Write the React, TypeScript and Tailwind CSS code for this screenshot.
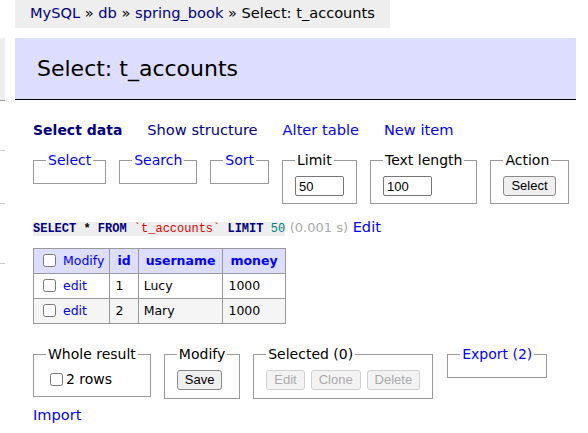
import React from "react";

const blue = "text-[#0000ff]";
const navy = "text-[#000080]";

function Box({ legend, link, children, pad = "pb-[7px]", extra = "" }: { legend: string; link?: boolean; children?: React.ReactNode; pad?: string; extra?: string }) {
  return (
    <fieldset className={`border border-[#999] px-[12px] pt-[7px] ${pad} min-w-0 ${extra}`}>
      <legend className={`px-[2px] text-[14px] leading-[18px] whitespace-nowrap ${link ? blue : "text-black"}`}>{legend}</legend>
      {children}
    </fieldset>
  );
}

function Btn({ children, disabled }: { children: React.ReactNode; disabled?: boolean }) {
  return (
    <button
      disabled={disabled}
      className={`h-[20px] px-[7px] rounded-[3px] border text-[13px] leading-[18px] font-['Liberation_Sans',Arial,sans-serif] ${
        disabled ? "bg-[#f3f3f3] border-[#d0d0d0] text-[#aaa]" : "bg-[#efefef] border-[#8a8a8a] text-black"
      }`}
    >
      {children}
    </button>
  );
}

function Check() {
  return <input type="checkbox" className="w-[13px] h-[13px] ml-[4px] mr-[3px] my-0 align-[-2px]" />;
}

const th = "border border-[#999] px-[7px] py-[4px] text-left font-bold";
const td = "border border-[#999] px-[5px] py-[4px]";

export default function App() {
  return (
    <div className="flex bg-white w-[588px] h-[433px] overflow-hidden font-['DejaVu_Sans',Verdana,sans-serif] text-[14.6px] leading-[18px] text-black">
      {/* cut-off sidebar */}
      <div className="w-[5px] shrink-0">
        <div className="mt-[38px] h-[63px] bg-[#eee] border-b border-[#999]" />
        <div className="h-[50px] border-b border-[#ccc]" />
        <div className="h-[53px] border-b border-[#ccc]" />
        <div className="h-[60px] border-b border-[#ccc]" />
      </div>

      <div className="ml-[10px] w-[561px] shrink-0">
        {/* breadcrumb */}
        <div className="inline-block bg-[#eee] h-[28px] px-[15px] leading-[26px] whitespace-nowrap">
          <a className={navy}>MySQL</a> » <a className={navy}>db</a> » <a className={navy}>spring_book</a> » Select: t_accounts
        </div>

        {/* heading */}
        <h2 className="mt-[10px] bg-[#ddf] border-b border-black px-[22px] py-[17px] text-[22px] leading-[27px] font-normal">
          Select: t_accounts
        </h2>

        <div className="pl-[18px]">
          <div className="mt-[21px] flex gap-[25px] whitespace-nowrap">
            <a className={`${navy} font-bold text-[14px]`}>Select data</a>
            <a className={navy}>Show structure</a>
            <a className={blue}>Alter table</a>
            <a className={blue}>New item</a>
          </div>

          <div className="mt-[12px] flex items-start gap-[13px]">
            <Box legend="Select" link />
            <Box legend="Search" link />
            <Box legend="Sort" link />
            <Box legend="Limit">
              <input
                defaultValue="50"
                className="block w-[49px] h-[20px] border border-[#767676] rounded-[2px] px-[3px] text-[13px] font-['Liberation_Sans',Arial,sans-serif]"
              />
            </Box>
            <Box legend="Text length">
              <input
                defaultValue="100"
                className="block w-[49px] h-[20px] border border-[#767676] rounded-[2px] px-[3px] text-[13px] font-['Liberation_Sans',Arial,sans-serif]"
              />
            </Box>
            <Box legend="Action">
              <div className="flex">
                <Btn>Select</Btn>
              </div>
            </Box>
          </div>

          <p className="mt-[14px] whitespace-nowrap">
            <code className="bg-[#eee] font-['Liberation_Mono',monospace] text-[12px] font-bold">
              <span className={navy}>SELECT</span> * <span className={navy}>FROM</span>{" "}
              <span className="text-[#dd0000] font-normal">`t_accounts`</span> <span className={navy}>LIMIT</span>{" "}
              <span className="text-[#008080] font-normal">50</span>
            </code>{" "}
            <span className="text-[#aaa] text-[13px]">(0.001 s)</span> <a className={blue}>Edit</a>
          </p>

          <table className="mt-[10px] border-collapse text-[12.5px] leading-[16px]">
            <thead>
              <tr className="bg-[#ddf]">
                <td className={`${td} text-left align-top`}>
                  <Check /> <a className={blue}>Modify</a>
                </td>
                <th className={`${th} ${blue}`}>id</th>
                <th className={`${th} ${blue}`}>username</th>
                <th className={`${th} ${blue}`}>money</th>
              </tr>
            </thead>
            <tbody>
              {[
                ["1", "Lucy", "1000"],
                ["2", "Mary", "1000"],
              ].map((r, i) => (
                <tr key={i} className={i % 2 ? "bg-[#f5f5f5]" : "bg-white"}>
                  <td className={td}>
                    <Check /> <a className={blue}>edit</a>
                  </td>
                  <td className={td}>{r[0]}</td>
                  <td className={td}>{r[1]}</td>
                  <td className={td}>{r[2]}</td>
                </tr>
              ))}
            </tbody>
          </table>

          <div className="mt-[21px] flex items-start gap-[13px]">
            <Box legend="Whole result" pad="pb-[8px]">
              <label className="flex items-center gap-[3px] pl-[4px] whitespace-nowrap text-[14px]">
                <input type="checkbox" className="w-[13px] h-[13px] m-0" />
                2 rows
              </label>
            </Box>
            <Box legend="Modify" pad="pb-[8px]">
              <div className="flex">
                <Btn>Save</Btn>
              </div>
            </Box>
            <Box legend="Selected (0)" pad="pb-[8px]">
              <div className="flex gap-[6px]">
                <Btn disabled>Edit</Btn>
                <Btn disabled>Clone</Btn>
                <Btn disabled>Delete</Btn>
              </div>
            </Box>
            <Box legend="Export (2)" link extra="ml-[1px]" />
          </div>

          <p className="mt-[7px]">
            <a className={blue}>Import</a>
          </p>
        </div>
      </div>
    </div>
  );
}
